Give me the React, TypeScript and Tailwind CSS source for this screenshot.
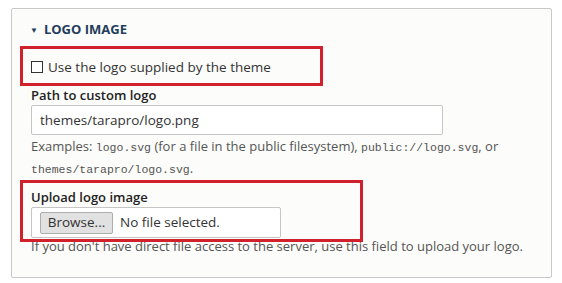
import React from 'react'

const sans = "font-['Open_Sans','Noto_Sans',sans-serif]"
const mono = "font-['Liberation_Mono',monospace] text-[11.5px]"

const Annotation: React.FC<{ className: string }> = ({ className }) => (
  <div className={`absolute border-[3px] border-[#d0212d] pointer-events-none ${className}`} />
)

export default function App() {
  return (
    <div className={`bg-white w-[562px] h-[283px] pt-[8px] pl-[11px] text-[#333] ${sans}`}>
      <div className="relative w-[541px] h-[270px] border border-[#c8c8c8] rounded-[2px] bg-[#fcfcfa] pl-[19px]">
        <div className="mt-[12px] h-[18px] flex items-center gap-[6px] -ml-[1px] text-[#1f3d5c] font-bold text-[13px]">
          <span className="text-[8px]">▼</span>
          <span>LOGO IMAGE</span>
        </div>

        <label className="mt-[18px] h-[20px] flex items-center gap-[5px] text-[13.5px]">
          <span className="w-[12px] h-[12px] border border-[#333] bg-white" />
          <span>Use the logo supplied by the theme</span>
        </label>

        <div className="mt-[9px] h-[18px] leading-[18px] font-semibold text-[13px] text-[#222]">Path to custom logo</div>
        <div className="mt-[1px] w-[412px] h-[30px] border border-[#c6c6c6] rounded-[2px] bg-white px-[8px] flex items-center text-[13.5px]">
          themes/tarapro/logo.png
        </div>
        <div className="mt-[1px] text-[13px] leading-[20px] text-[#555]">
          Examples: <code className={mono}>logo.svg</code> (for a file in the public filesystem),{' '}
          <code className={mono}>public://logo.svg</code>, or
          <br />
          <code className={mono}>themes/tarapro/logo.svg</code>.
        </div>

        <div className="mt-[8px] h-[18px] leading-[18px] font-semibold text-[13px] text-[#222]">Upload logo image</div>
        <div className="mt-[1px] w-[250px] h-[31px] border border-[#c6c6c6] rounded-[2px] bg-white pl-[8px] flex items-center gap-[7px] text-[13.5px]">
          <span className="h-[22px] w-[73px] justify-center flex items-center border border-[#adadad] bg-[#e1e1e1] rounded-[2px]">
            Browse...
          </span>
          <span>No file selected.</span>
        </div>
        <div className="-mt-[1px] h-[18px] leading-[18px] text-[13px] text-[#555]">
          If you don't have direct file access to the server, use this field to upload your logo.
        </div>

        <Annotation className="left-[8px] top-[37px] w-[303px] h-[40px]" />
        <Annotation className="left-[8px] top-[171px] w-[343px] h-[62px]" />
      </div>
    </div>
  )
}
